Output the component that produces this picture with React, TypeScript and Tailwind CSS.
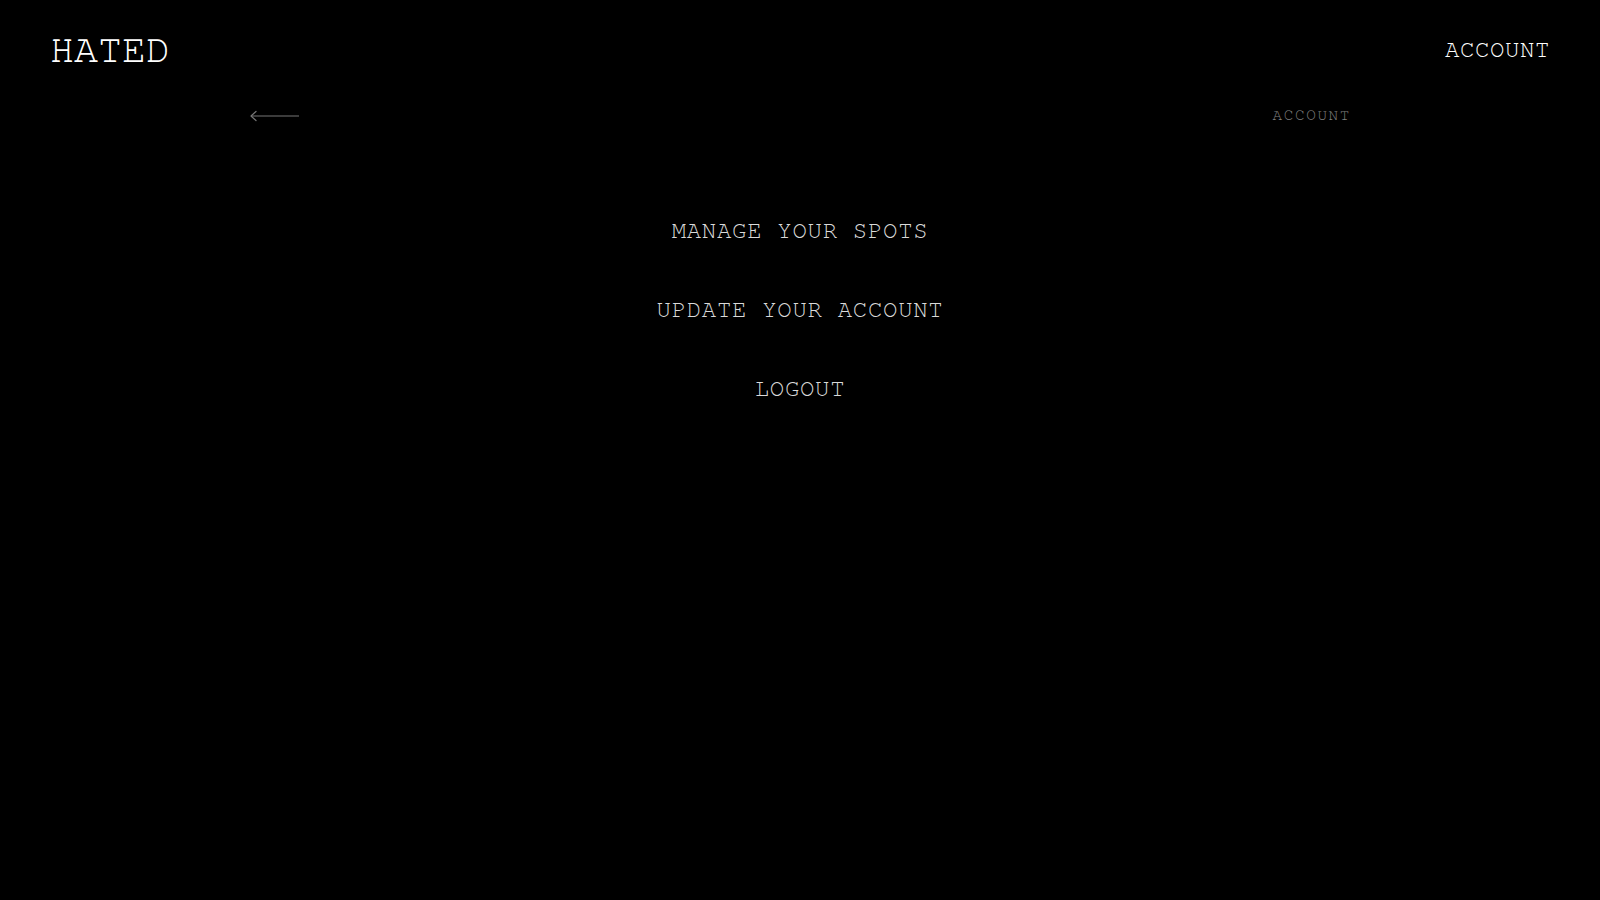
const mono = "font-['Nimbus_Mono_PS','Nimbus_Mono_L','FreeMono','Courier','Courier_New','Liberation_Mono',monospace]";

function BackArrow() {
	return (
		<svg width="52" height="14" viewBox="0 0 52 14" fill="none" className="block">
			<path d="M2 7 H50" stroke="#777" strokeWidth="1.2" />
			<path d="M7 2.5 L2 7 L7 11.5" stroke="#777" strokeWidth="1.2" strokeLinecap="round" strokeLinejoin="round" />
		</svg>
	);
}

export default function App() {
	const items = ["MANAGE YOUR SPOTS", "UPDATE YOUR ACCOUNT", "LOGOUT"];

	return (
		<div className={`min-h-screen w-full bg-black ${mono}`}>
			<header className="flex h-24 items-center justify-between px-[50px]">
				<a className="mt-1 text-[40px] leading-none text-white">HATED</a>
				<a className="mt-1 text-2xl leading-none tracking-[0.6px] text-white">ACCOUNT</a>
			</header>

			<div className="mx-auto flex h-10 max-w-[1100px] items-center justify-between">
				<button className="-ml-[1px] cursor-pointer">
					<BackArrow />
				</button>
				<span className="-mt-[2px] text-[16px] leading-none tracking-[1.6px] text-[#808080] -mr-[1px]">ACCOUNT</span>
			</div>

			<nav className="mt-[79px] flex flex-col items-center gap-[47px]">
				{items.map((item) => (
					<a key={item} className="text-2xl leading-8 tracking-[0.7px] text-[#dadada] cursor-pointer">
						{item}
					</a>
				))}
			</nav>
		</div>
	);
}
